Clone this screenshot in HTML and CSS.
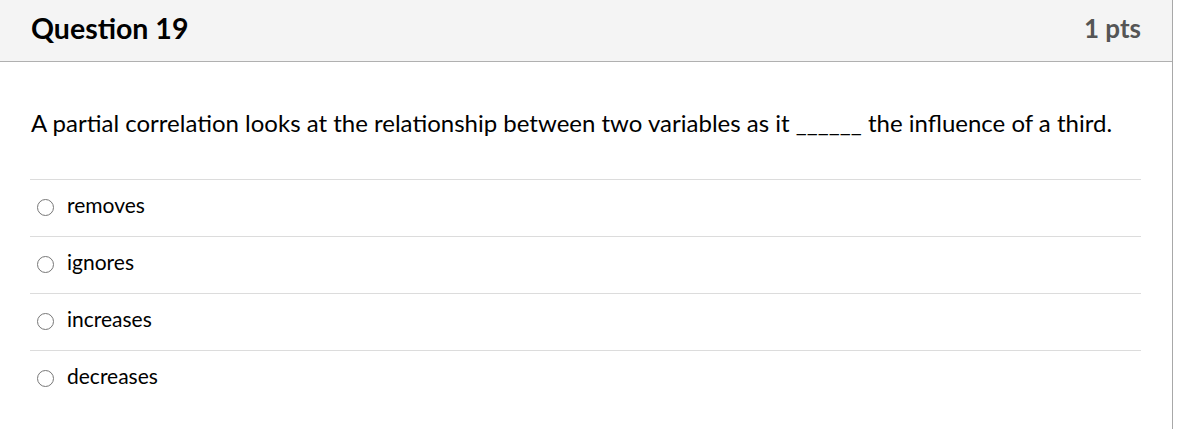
FILE: index.html
```html
<!DOCTYPE html>
<html>
<head>
<meta charset="utf-8">
<link rel="stylesheet" href="styles.css">
</head>
<body>
<div class="question">
  <div class="header">
    <span class="title">Question 19</span>
    <span class="pts">1 pts</span>
  </div>
  <div class="content">
    <p class="text">A partial correlation looks at the relationship between two variables as it ______ the influence of a third.</p>
    <div class="answers">
      <label class="answer"><span class="radio"></span><span>removes</span></label>
      <label class="answer"><span class="radio"></span><span>ignores</span></label>
      <label class="answer"><span class="radio"></span><span>increases</span></label>
      <label class="answer"><span class="radio"></span><span>decreases</span></label>
    </div>
  </div>
</div>
</body>
</html>
```
FILE: styles.css
```css
html, body {
  margin: 0;
  padding: 0;
  background: #fff;
}
body {
  font-family: Lato, "Open Sans", sans-serif;
  color: #000;
}
.question {
  width: 1172px;
  min-height: 429px;
  border-right: 1px solid #a8a8a8;
  box-sizing: content-box;
}
.header {
  height: 62px;
  background: #f4f4f4;
  border-bottom: 1px solid #b0b0b0;
  box-sizing: border-box;
  display: flex;
  align-items: center;
  justify-content: space-between;
  padding: 0 31px 6px 31px;
}
.title {
  font-size: 28.5px;
  font-weight: 700;
  color: #000;
}
.pts {
  font-size: 26px;
  font-weight: 700;
  color: #555;
}
.content {
  padding: 0 31px 0 30px;
}
.text {
  margin: 0;
  padding: 46px 0 0 1px;
  height: 71px;
  font-size: 24px;
  line-height: 30px;
}
.answers {
  display: flex;
  flex-direction: column;
}
.answer {
  height: 57px;
  border-top: 1px solid #dcdcdc;
  box-sizing: border-box;
  display: flex;
  align-items: center;
  font-size: 21px;
  padding-left: 7px;
  padding-bottom: 8px;
  gap: 13px;
}
.radio {
  width: 17px;
  height: 17px;
  border: 1.5px solid #777;
  border-radius: 50%;
  box-sizing: border-box;
  flex: none;
  margin-top: 7px;
}
```
